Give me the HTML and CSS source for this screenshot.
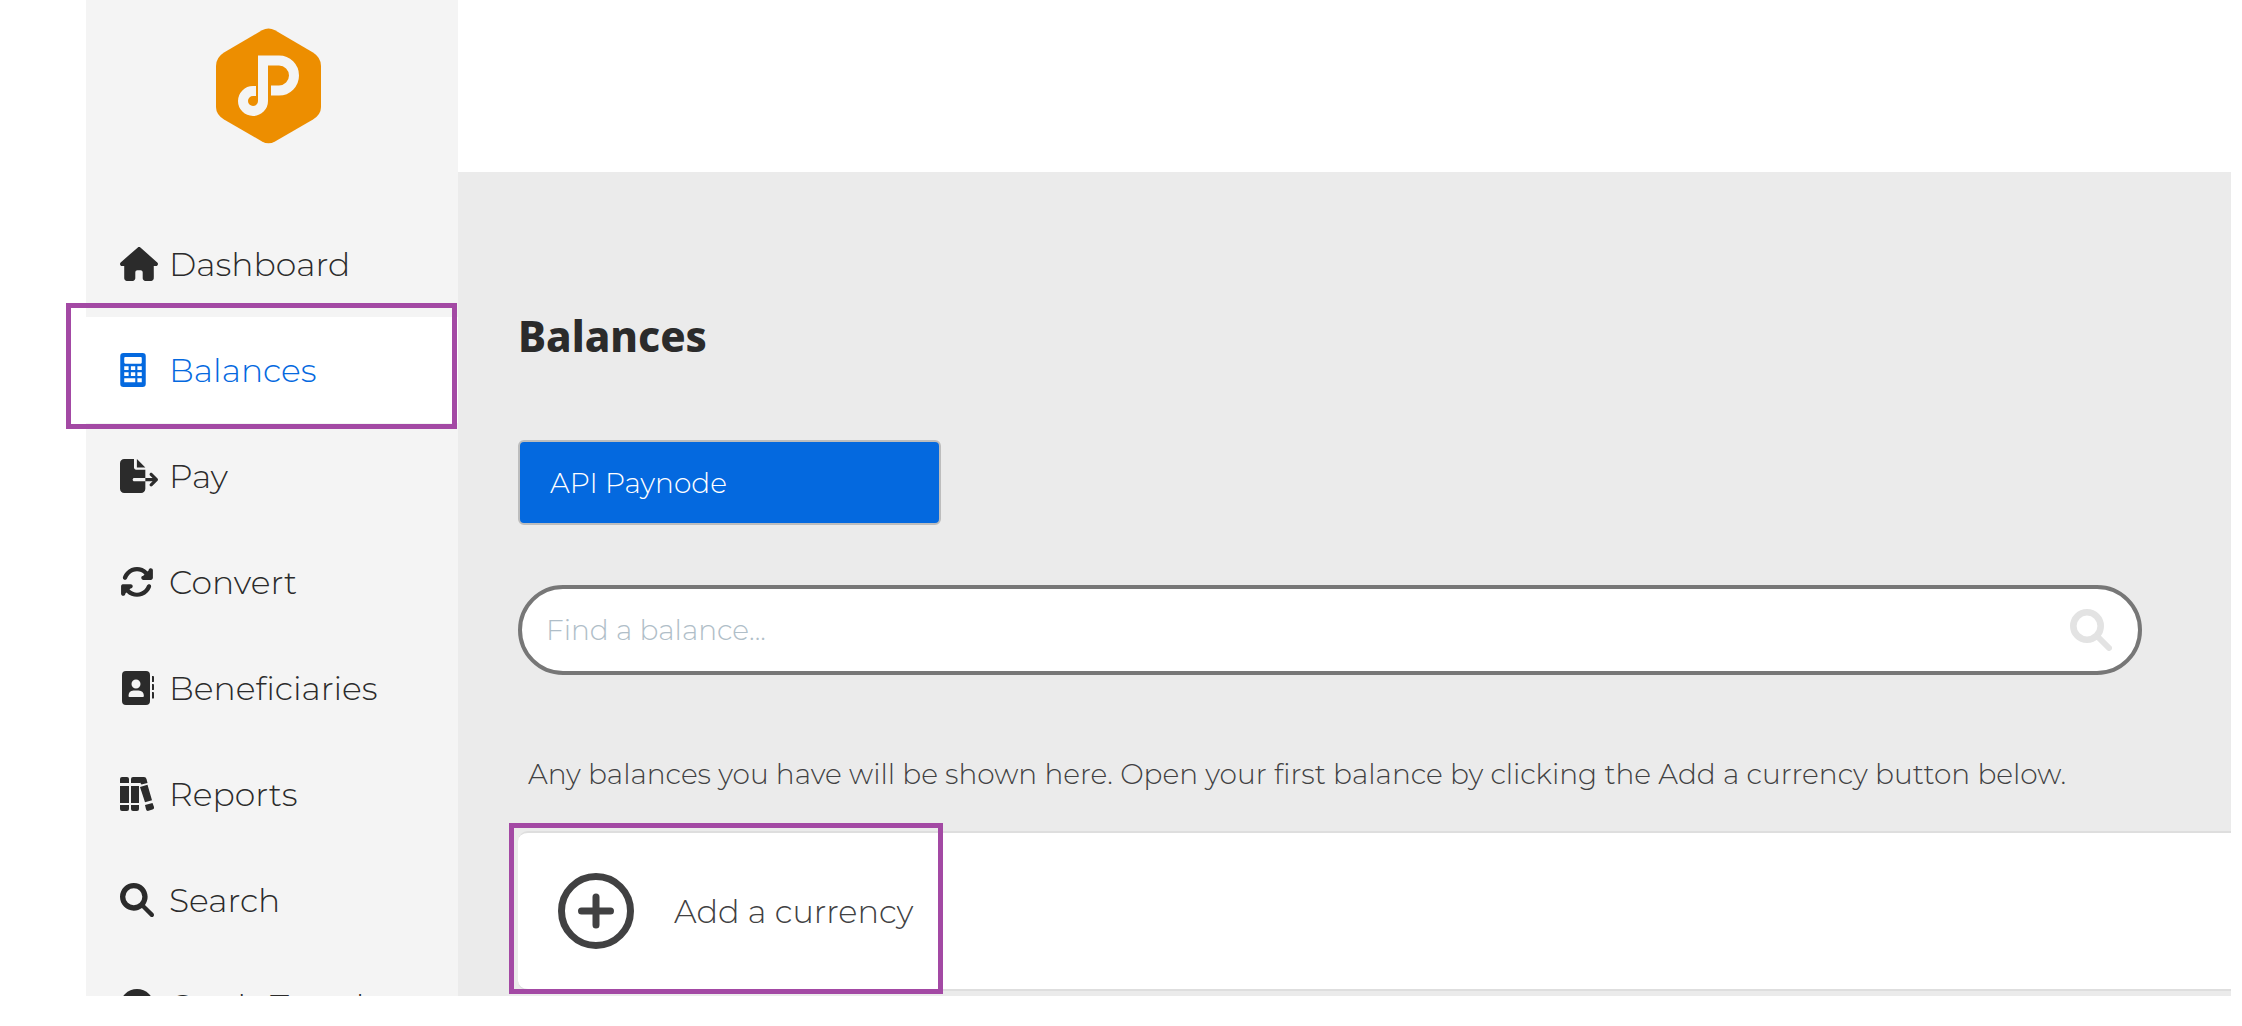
FILE: index.html
```html
<!DOCTYPE html>
<html lang="en">
<head>
<meta charset="utf-8">
<title>Balances</title>
<link rel="stylesheet" href="styles.css">
</head>
<body>
<div class="app">
  <aside class="sidebar">
    <a class="logo" href="#" aria-label="Home">
      <svg viewBox="0 0 105 116" width="105" height="116" aria-hidden="true">
        <path fill="#ed8e00" d="M46 2.200 Q52.500 -1.200 59 2.200 L97 24.500 Q105 29.500 105 38 V79 Q105 86.500 97 91.500 L59 113.500 Q52.500 117.200 46 113.500 L8 91.500 Q0 86.500 0 79 V38 Q0 29.500 8 24.500 Z"/>
        <path fill="none" stroke="#f4f4f4" stroke-width="10" d="M40 63 H37 A10 10 0 1 0 47 73 V32.500 H63 A15 15 0 0 1 63 62.500 H55"/>
      </svg>
    </a>
    <nav class="nav">
      <a class="item" href="#">
        <span class="icon"><svg viewBox="0 0 576 512" width="38" height="34"><path d="M575.800 255.500c0 18-15 32.100-32 32.100h-32l.7 160.200c0 2.700-.2 5.400-.5 8.100V472c0 22.100-17.900 40-40 40h-88c-22.100 0-40-17.900-40-40v-88c0-17.700-14.300-32-32-32h-48c-17.700 0-32 14.300-32 32v88c0 22.100-17.900 40-40 40h-88c-22.100 0-40-17.900-40-40V287.600H32c-18 0-32-14-32-32.100 0-9 3-17 10-24L266.400 8c7-7 15-8 22-8s15 2 21 7l255.400 224.500c8 7 12 15 11 24z"/></svg></span>
        <span>Dashboard</span></a>
      <a class="item active" href="#" aria-current="page">
        <span class="icon"><svg viewBox="0 0 384 512" width="26" height="34"><path fill-rule="evenodd" d="M48 0H336Q384 0 384 48V464Q384 512 336 512H48Q0 512 0 464V48Q0 0 48 0ZM76 60Q60 60 60 76V144Q60 160 76 160H308Q324 160 324 144V76Q324 60 308 60ZM60 200V256H126V200ZM160 200V256H226V200ZM258 200V256H324V200ZM60 290V346H126V290ZM160 290V346H226V290ZM258 290V346H324V290ZM60 382V442H226V382ZM258 382V442H324V382Z"/></svg></span>
        <span>Balances</span></a>
      <a class="item" href="#">
        <span class="icon"><svg viewBox="0 0 576 512" width="38" height="34"><path d="M0 64C0 28.700 28.700 0 64 0H212V128C212 145.700 226.300 160 244 160H384V288H216C202.700 288 192 298.700 192 312S202.700 336 216 336H384V448C384 483.300 355.300 512 320 512H64C28.700 512 0 483.300 0 448ZM384 336V288H494L455 249C446 239.600 446 224.400 455 215S480 205.700 489 215L569 295C578 304.400 578 319.600 569 329L489 409C480 418.300 464 418.300 455 409S446 384.400 455 375L494 336ZM384 128H256V0Z"/></svg></span>
        <span>Pay</span></a>
      <a class="item" href="#">
        <span class="icon"><svg viewBox="0 0 512 512" width="34" height="34"><path d="M105.100 202.600c7.700-21.800 20.200-42.300 37.800-59.800c62.500-62.500 163.800-62.500 226.300 0L386.300 160H352c-17.700 0-32 14.300-32 32s14.300 32 32 32H463.500c17.700 0 32-14.300 32-32V80c0-17.700-14.300-32-32-32s-32 14.300-32 32v35.200L414.400 97.600c-87.500-87.500-229.300-87.500-316.800 0C73.200 122 55.600 150.700 44.800 181.400c-5.900 16.700 2.900 34.900 19.500 40.800s34.900-2.900 40.800-19.500zM39 289.300c-5 1.500-9.800 4.200-13.700 8.200c-4 4-6.700 8.800-8.100 14c-.8 3.100-1.200 6.300-1.200 9.600V432c0 17.700 14.300 32 32 32s32-14.300 32-32V396.900l17.600 17.500c87.500 87.400 229.300 87.400 316.700 0c24.400-24.400 42.100-53.100 52.900-83.700c5.900-16.700-2.900-34.900-19.500-40.800s-34.900 2.900-40.800 19.500c-7.700 21.800-20.200 42.300-37.800 59.800c-62.500 62.500-163.800 62.500-226.300 0L125.600 352H160c17.700 0 32-14.300 32-32s-14.300-32-32-32H48.400c-3.200 0-6.400.4-9.400 1.300zM463 48L320 192L352 224H464L495 192V80ZM48 464L192 320L160 288H48L16 320V432Z"/></svg></span>
        <span>Convert</span></a>
      <a class="item" href="#">
        <span class="icon book"><svg viewBox="0 0 512 544" width="32" height="34"><path fill-rule="evenodd" d="M64 0H384Q448 0 448 64V480Q448 544 384 544H64Q0 544 0 480V64Q0 0 64 0ZM224 136A72 72 0 1 0 224 280A72 72 0 1 0 224 136ZM184 312Q104 316 104 400Q104 416 120 416H334Q350 416 350 400Q350 316 264 312Z"/><path d="M480 80h18q14 0 14 14v68q0 14-14 14h-18zM480 208h18q14 0 14 14v68q0 14-14 14h-18zM480 336h18q14 0 14 14v76q0 14-14 14h-18z"/></svg></span>
        <span>Beneficiaries</span></a>
      <a class="item" href="#">
        <span class="icon"><svg viewBox="0 0 34 34" width="34" height="34"><path d="M2 0h5q2 0 2 2v4H0V2q0-2 2-2zM0 9h9v17H0zM0 28h9v4q0 2-2 2H2q-2 0-2-2zM13 0h11q2 0 2.500 2l1 4-6 1.500-1.500-2V6H11V2q0-2 2-2zM11 9h8v17h-8zM11 28h8v4q0 2-2 2h-4q-2 0-2-2zM20 10l7.500-2.200 4.500 15.500-7 2zM25 28l7.500-2 1.500 4q.5 2-1.500 2.500l-4 1.300q-2 .5-2.500-1.500z"/></svg></span>
        <span>Reports</span></a>
      <a class="item" href="#">
        <span class="icon"><svg viewBox="0 0 512 512" width="34" height="34"><path d="M416 208c0 45.900-14.900 88.300-40 122.700L502.600 457.400c12.500 12.500 12.500 32.800 0 45.300s-32.800 12.500-45.300 0L330.700 376c-34.400 25.200-76.800 40-122.700 40C93.100 416 0 322.900 0 208S93.100 0 208 0S416 93.100 416 208zM208 336a128 128 0 1 0 0-256 128 128 0 1 0 0 256z"/></svg></span>
        <span>Search</span></a>
      <a class="item" href="#">
        <span class="icon"><svg viewBox="0 0 34 34" width="34" height="34"><circle cx="17" cy="17" r="17"/></svg></span>
        <span>Cards Travel</span></a>
    </nav>
  </aside>
  <div class="page">
    <header class="topbar"></header>
    <main class="main">
      <h1>Balances</h1>
      <button class="account" type="button">API Paynode</button>
      <form class="search">
        <input type="search" aria-label="Find a balance" placeholder="Find a balance...">
        <svg viewBox="0 0 42 42" width="42" height="42" fill="none" stroke="#e3e3e3" aria-hidden="true"><circle cx="17" cy="17" r="13.700" stroke-width="6.600"/><path stroke-width="6" stroke-linecap="round" d="M28 28L39 39"/></svg>
      </form>
      <p class="hint">Any balances you have will be shown here. Open your first balance by clicking the Add a currency button below.</p>
      <div class="panel">
        <button class="add" type="button">
          <svg viewBox="0 0 76 76" width="76" height="76" fill="none" stroke="#414142" stroke-width="7" stroke-linecap="round" aria-hidden="true"><circle cx="38" cy="38" r="34.500"/><path d="M38 24V52M23.500 38H52.500"/></svg>
          <span>Add a currency</span>
        </button>
      </div>
    </main>
  </div>
</div>
</body>
</html>
```
FILE: styles.css
```css
* { box-sizing: border-box; }

body {
  margin: 0;
  background: #fff;
  color: #2b2b2b;
  font-family: Montserrat, Lato, sans-serif;
  font-size: 28px;
  font-weight: 300;
}

button, input { font: inherit; }

.app {
  display: flex;
  height: calc(100vh - 30px);
  margin: 0 11px 0 86px;
}

.sidebar {
  flex: 0 0 372px;
  background: #f4f4f4;
  clip-path: inset(0 0 0 -20px);
}

.logo {
  display: flex;
  justify-content: center;
  padding: 28px 8px 67px 0;
}

.logo svg { display: block; }

.item {
  display: flex;
  align-items: center;
  height: 106px;
  padding-left: 34px;
  color: #2b2b2b;
  font-size: 33px;
  text-decoration: none;
}

.icon {
  flex: 0 0 49px;
  display: flex;
}

.icon.book { padding-left: 2px; }

.icon svg { fill: currentColor; }

.item.active {
  position: relative;
  background: #fff;
  color: #0469df;
}

.item.active::before {
  content: "";
  position: absolute;
  inset: -14px 1px -6px -20px;
  border: 5px solid #a349a4;
}

.page {
  flex: 1;
  min-width: 0;
  display: flex;
  flex-direction: column;
}

.topbar { flex: 0 0 172px; }

.main {
  flex: 1;
  min-height: 0;
  padding: 134px 0 0 60px;
  background: #ebebeb;
}

h1 {
  margin: 0 0 74px;
  font-family: "Noto Sans", sans-serif;
  font-size: 42px;
  line-height: 60px;
  font-weight: 800;
}

.account {
  display: block;
  width: 423px;
  height: 85px;
  padding: 0 30px;
  border: 2px solid #bdbdbd;
  border-radius: 6px;
  background: #0469df;
  color: #fff;
  text-align: left;
}

.search {
  display: flex;
  align-items: center;
  height: 90px;
  margin: 60px 89px 74px 0;
  padding: 0 26px 0 24px;
  border: 4px solid #777;
  border-radius: 45px;
  background: #fff;
}

.search input {
  flex: 1;
  min-width: 0;
  padding: 0;
  border: 0;
  outline: 0;
  background: none;
}

.search input::placeholder { color: #b0bec8; }

.hint {
  margin: 0 0 32px;
  padding-left: 10px;
  color: #414142;
  line-height: 50px;
}

.panel {
  border: solid #dedede;
  border-width: 2px 0;
  border-radius: 10px 0 0 10px;
  background: #fff;
}

.add {
  position: relative;
  display: flex;
  align-items: center;
  gap: 40px;
  height: 156px;
  padding: 0 24px 0 40px;
  border: 0;
  background: none;
  color: #414142;
  font-size: 32px;
}

.add::before {
  content: "";
  position: absolute;
  inset: -10px -6px -5px -9px;
  border: 5px solid #a349a4;
}
```
